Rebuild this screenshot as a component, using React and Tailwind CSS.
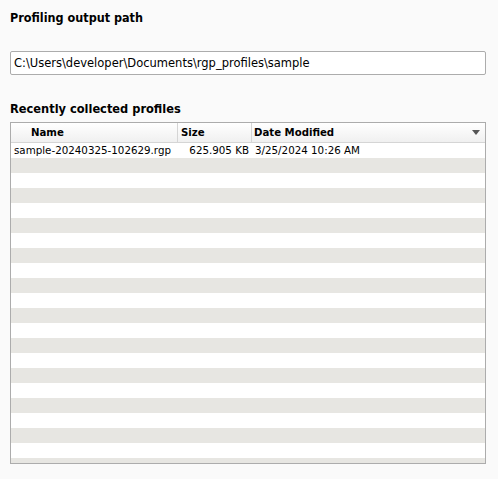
import React from "react";

const font = { fontFamily: '"DejaVu Sans", Verdana, sans-serif' };
const bold = { fontFamily: '"DejaVu Sans Condensed", "DejaVu Sans", sans-serif', fontStretch: "condensed" };

export default function App() {
  const rows = Array.from({ length: 22 });
  return (
    <div
      className="w-[498px] h-[479px] bg-[#fafafa] text-[11.5px] text-black overflow-hidden pl-[10px] pr-[12px]"
      style={font}
    >
      <div className="pt-[10px] h-[51px] font-bold text-[12.5px] leading-[15px]" style={bold}>Profiling output path</div>
      <div className="h-[24px] border border-[#acacac] rounded-[2px] bg-white flex items-center pl-[3px] leading-[14px] whitespace-nowrap">
        C:\Users\developer\Documents\rgp_profiles\sample
      </div>
      <div className="pt-[26px] h-[47px] font-bold text-[12.7px] leading-[15px]" style={bold}>Recently collected profiles</div>
      <div className="border border-[#acacac] h-[342px] overflow-hidden bg-white">
        <div className="h-[20px] flex border-b border-[#d5d5d5] bg-gradient-to-b from-white to-[#f0f0f0] font-bold text-[11.3px] leading-[19px]" style={bold}>
          <div className="w-[167px] pl-[20px] border-r border-[#d5d5d5]">Name</div>
          <div className="w-[74px] pl-[3px] border-r border-[#d5d5d5]">Size</div>
          <div className="flex-1 pl-[2px] flex justify-between pr-[5px]">
            <span>Date Modified</span>
            <svg width="8" height="5" viewBox="0 0 8 5" className="mt-[7px]">
              <path d="M0 0H8L4 5Z" fill="#555" />
            </svg>
          </div>
        </div>
        {rows.map((_, i) => (
          <div
            key={i}
            className={`h-[15px] flex text-[10.3px] leading-[15px] whitespace-nowrap ${i % 2 === 0 ? "bg-white" : "bg-[#e7e6e2]"}`}
          >
            {i === 0 && (
              <>
                <div className="w-[167px] pl-[3px] overflow-hidden">sample-20240325-102629.rgp</div>
                <div className="w-[74px] text-right pr-[3px]">625.905 KB</div>
                <div className="flex-1 pl-[3px]">3/25/2024 10:26 AM</div>
              </>
            )}
          </div>
        ))}
      </div>
    </div>
  );
}
